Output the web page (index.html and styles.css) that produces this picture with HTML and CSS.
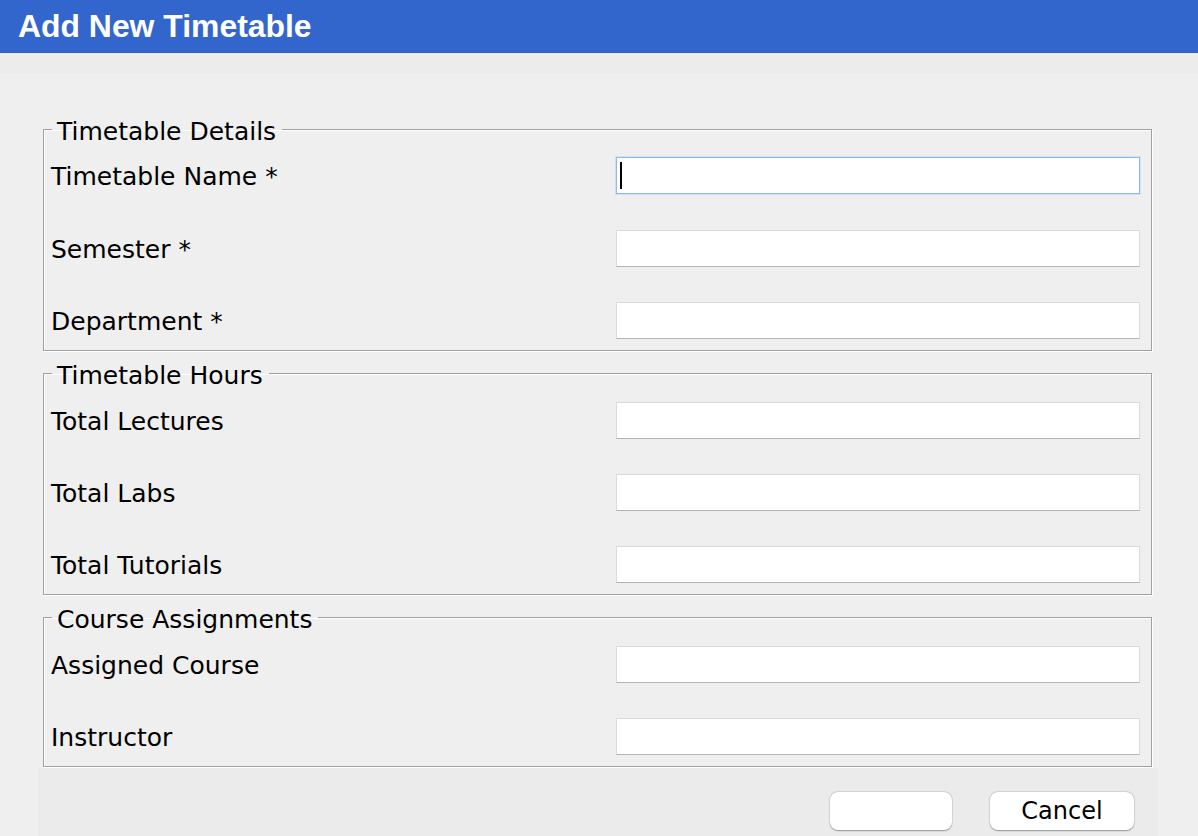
FILE: index.html
```html
<!DOCTYPE html>
<html lang="en">
<head>
<meta charset="utf-8">
<title>Add New Timetable</title>
<link rel="stylesheet" href="styles.css">
</head>
<body>
<div class="dialog">
  <header class="titlebar"><h1 class="title">Add New Timetable</h1></header>
  <div class="band"></div>
  <main class="content">
    <fieldset class="group group-first">
      <legend class="legend">Timetable Details</legend>
      <div class="row"><span class="label">Timetable Name *</span><div class="field focused"><span class="caret"></span></div></div>
      <div class="row"><span class="label">Semester *</span><div class="field"></div></div>
      <div class="row"><span class="label">Department *</span><div class="field"></div></div>
    </fieldset>
    <fieldset class="group">
      <legend class="legend">Timetable Hours</legend>
      <div class="row"><span class="label">Total Lectures</span><div class="field"></div></div>
      <div class="row"><span class="label">Total Labs</span><div class="field"></div></div>
      <div class="row"><span class="label">Total Tutorials</span><div class="field"></div></div>
    </fieldset>
    <fieldset class="group">
      <legend class="legend">Course Assignments</legend>
      <div class="row"><span class="label">Assigned Course</span><div class="field"></div></div>
      <div class="row"><span class="label">Instructor</span><div class="field"></div></div>
    </fieldset>
  </main>
  <footer class="footer">
    <button class="btn btn-save" type="button"></button>
    <button class="btn btn-cancel" type="button">Cancel</button>
  </footer>
</div>
</body>
</html>
```
FILE: styles.css
```css
html, body {
  margin: 0;
  padding: 0;
  height: 100%;
  overflow: hidden;
}
body {
  background: #efefef;
  font-family: "DejaVu Sans", "Verdana", sans-serif;
  color: #000;
}
.dialog {
  display: flex;
  flex-direction: column;
  height: 836px;
}
.titlebar {
  height: 52px;
  background: #3366cc;
  border-bottom: 1px solid #2e5cb8;
  display: flex;
  align-items: center;
  padding-left: 18px;
}
.title {
  margin: 0;
  font-family: "Liberation Sans", Arial, sans-serif;
  font-weight: bold;
  font-size: 31.9px;
  color: #fff;
  line-height: 1;
  padding-top: 2px;
}
.band {
  height: 20px;
  background: #ececec;
}
.content {
  padding: 41px 46px 0 43px;
  display: flex;
  flex-direction: column;
  gap: 7px;
}
.group {
  margin: 0;
  padding: 14px 11px 11px 7px;
  border: 1px solid #a0a0a0;
  box-shadow: 1px 1px 0 #fff, inset 1px 1px 0 #fff;
  display: flex;
  flex-direction: column;
  gap: 35px;
  min-width: 0;
}
.group-first {
  gap: 35.5px;
  padding-top: 13px;
}
.legend {
  font-size: 25px;
  line-height: 24px;
  padding: 6px 6px 0 5px;
  margin-left: 1px;
}
.row {
  display: flex;
  align-items: center;
  justify-content: space-between;
  height: 37px;
}
.label {
  font-size: 25px;
  line-height: 24px;
  padding-top: 3px;
}
.field {
  width: 524px;
  height: 37px;
  box-sizing: border-box;
  background: #fff;
  border: 1px solid #dadada;
  border-bottom-color: #b4b4b4;
  position: relative;
}
.field.focused {
  border: 1px solid #8ebbe4;
  box-shadow: 0 0 0 1px #cfe2f4;
}
.caret {
  position: absolute;
  left: 3px;
  top: 4px;
  width: 2px;
  height: 27px;
  background: #000;
}
.footer {
  margin: 1px 40px 0 38px;
  flex: 1;
  background: #ebebeb;
  display: flex;
  justify-content: flex-end;
  align-items: flex-start;
  gap: 38px;
  padding: 24px 24px 0 0;
}
.btn {
  height: 38px;
  background: #fff;
  border: none;
  border-radius: 8px;
  box-shadow: 0 0.5px 1.5px rgba(0, 0, 0, 0.35), 0 0 0 0.5px rgba(0, 0, 0, 0.08);
  font-family: "DejaVu Sans", "Verdana", sans-serif;
  font-size: 24px;
  color: #000;
  padding: 0;
}
.btn-save { width: 122px; }
.btn-cancel { width: 144px; }
```
